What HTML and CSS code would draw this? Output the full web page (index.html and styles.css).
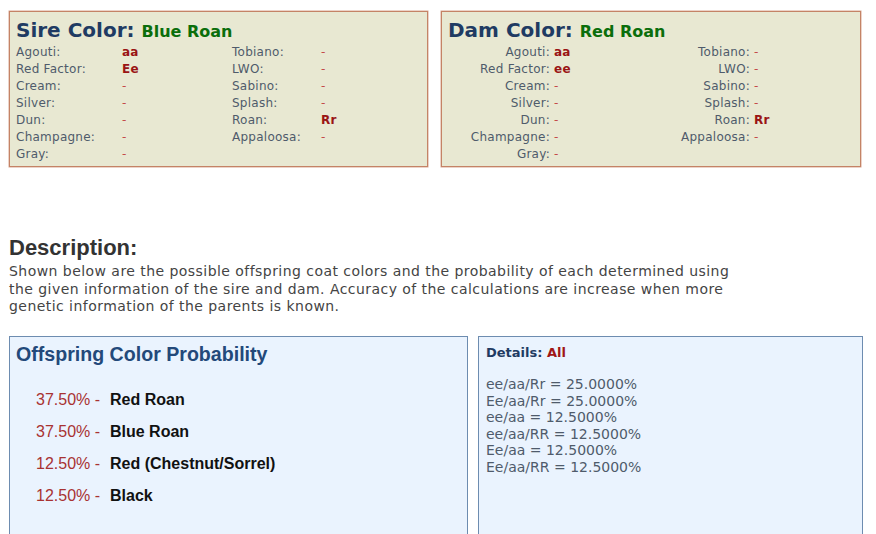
FILE: index.html
```html
<!DOCTYPE html>
<html>
<head>
<meta charset="utf-8">
<link rel="stylesheet" href="styles.css">
</head>
<body>
<div class="page">
  <div class="parents">
    <div class="parent sire">
      <h2 class="parent-title">Sire Color: <span class="coat">Blue Roan</span></h2>
      <div class="genes">
        <span class="lbl">Agouti:</span><span class="val">aa</span><span class="lbl">Tobiano:</span><span class="val none">-</span>
        <span class="lbl">Red Factor:</span><span class="val">Ee</span><span class="lbl">LWO:</span><span class="val none">-</span>
        <span class="lbl">Cream:</span><span class="val none">-</span><span class="lbl">Sabino:</span><span class="val none">-</span>
        <span class="lbl">Silver:</span><span class="val none">-</span><span class="lbl">Splash:</span><span class="val none">-</span>
        <span class="lbl">Dun:</span><span class="val none">-</span><span class="lbl">Roan:</span><span class="val">Rr</span>
        <span class="lbl">Champagne:</span><span class="val none">-</span><span class="lbl">Appaloosa:</span><span class="val none">-</span>
        <span class="lbl">Gray:</span><span class="val none">-</span>
      </div>
    </div>
    <div class="parent dam">
      <h2 class="parent-title">Dam Color: <span class="coat">Red Roan</span></h2>
      <div class="genes">
        <span class="lbl">Agouti:</span><span class="val">aa</span><span class="lbl">Tobiano:</span><span class="val none">-</span>
        <span class="lbl">Red Factor:</span><span class="val">ee</span><span class="lbl">LWO:</span><span class="val none">-</span>
        <span class="lbl">Cream:</span><span class="val none">-</span><span class="lbl">Sabino:</span><span class="val none">-</span>
        <span class="lbl">Silver:</span><span class="val none">-</span><span class="lbl">Splash:</span><span class="val none">-</span>
        <span class="lbl">Dun:</span><span class="val none">-</span><span class="lbl">Roan:</span><span class="val">Rr</span>
        <span class="lbl">Champagne:</span><span class="val none">-</span><span class="lbl">Appaloosa:</span><span class="val none">-</span>
        <span class="lbl">Gray:</span><span class="val none">-</span>
      </div>
    </div>
  </div>

  <div class="description">
    <h2 class="desc-title">Description:</h2>
    <p class="desc-text">Shown below are the possible offspring coat colors and the probability of each determined using the given information of the sire and dam. Accuracy of the calculations are increase when more genetic information of the parents is known.</p>
  </div>

  <div class="results">
    <div class="result-box offspring">
      <h3 class="off-title">Offspring Color Probability</h3>
      <ul class="off-list">
        <li><span class="pct">37.50% -</span><span class="name">Red Roan</span></li>
        <li><span class="pct">37.50% -</span><span class="name">Blue Roan</span></li>
        <li><span class="pct">12.50% -</span><span class="name">Red (Chestnut/Sorrel)</span></li>
        <li><span class="pct">12.50% -</span><span class="name">Black</span></li>
      </ul>
    </div>
    <div class="result-box details">
      <div class="det-title">Details: <span class="det-all">All</span></div>
      <div class="det-lines">
        <div>ee/aa/Rr = 25.0000%</div>
        <div>Ee/aa/Rr = 25.0000%</div>
        <div>ee/aa = 12.5000%</div>
        <div>ee/aa/RR = 12.5000%</div>
        <div>Ee/aa = 12.5000%</div>
        <div>Ee/aa/RR = 12.5000%</div>
      </div>
    </div>
  </div>
</div>
</body>
</html>
```

FILE: styles.css
```css
html, body {
  margin: 0;
  padding: 0;
  overflow: hidden;
  background: #ffffff;
}

body {
  font-family: "DejaVu Sans", Verdana, sans-serif;
  width: 876px;
  height: 534px;
}

.page {
  padding: 11px 0 0 9px;
}

.parents {
  display: grid;
  grid-template-columns: 419px 420px;
  column-gap: 13px;
}

.parent {
  background: #e8e8d2;
  border: 1px solid #c48366;
  box-shadow: 0 0 0 0.5px #d9a892;
  padding: 6px 6px 4px 6px;
  height: 156px;
  box-sizing: border-box;
}

.parent-title {
  margin: 0;
  font-size: 20px;
  line-height: 25px;
  font-weight: bold;
  color: #1f3b63;
}

.coat {
  font-size: 16px;
  color: #0b6e0b;
}

.genes {
  display: grid;
  font-size: 12px;
  letter-spacing: 0.25px;
  line-height: 17px;
  color: #4f5b6b;
}

.sire .genes {
  grid-template-columns: 106px 110px 89px 1fr;
}

.dam .genes {
  grid-template-columns: 102px 100px 100px 1fr;
}

.dam .lbl {
  text-align: right;
}

.dam .val {
  padding-left: 4px;
}

.val {
  color: #9a1414;
  font-weight: bold;
}

.val.none {
  color: #c44a4a;
  font-weight: normal;
}

.description {
  padding-top: 68px;
}

.desc-title {
  margin: 0;
  font-family: "Liberation Sans", Arial, sans-serif;
  font-size: 22px;
  line-height: 26px;
  font-weight: bold;
  color: #333333;
}

.desc-text {
  margin: 2px 0 0 0;
  width: 740px;
  font-size: 14px;
  letter-spacing: 0.45px;
  line-height: 17.5px;
  color: #444444;
}

.results {
  margin-top: 20px;
  display: grid;
  grid-template-columns: 459px 385px;
  column-gap: 10px;
}

.result-box {
  background: #eaf3fe;
  border: 1px solid #6d8cb0;
  height: 230px;
  box-sizing: border-box;
}

.offspring {
  padding: 5px 6px 0 6px;
}

.off-title {
  margin: 0;
  font-family: "Liberation Sans", Arial, sans-serif;
  font-size: 19.6px;
  line-height: 24px;
  font-weight: bold;
  color: #23497a;
}

.off-list {
  list-style: none;
  margin: 18px 0 0 0;
  padding: 0 0 0 20px;
  font-family: "Liberation Sans", Arial, sans-serif;
  font-size: 16px;
  line-height: 32px;
}

.pct {
  display: inline-block;
  width: 74px;
  color: #a83232;
}

.name {
  font-weight: bold;
  color: #111111;
}

.details {
  padding: 7px 7px 0 7px;
}

.det-title {
  font-size: 13px;
  line-height: 17px;
  font-weight: bold;
  color: #1f3b63;
}

.det-all {
  color: #a01616;
}

.det-lines {
  margin-top: 15.75px;
  font-size: 14px;
  line-height: 16.5px;
  color: #4f5b6b;
}
```
